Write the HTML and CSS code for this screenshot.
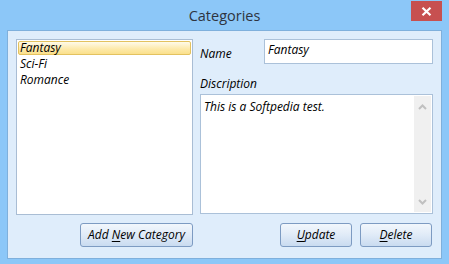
FILE: index.html
```html
<!DOCTYPE html>
<html>
<head>
<meta charset="utf-8">
<link rel="stylesheet" href="styles.css">
</head>
<body>
<div class="window">
  <div class="titlebar">
    <div class="title">Categories</div>
    <div class="close">
      <svg width="11" height="9" viewBox="0 0 11 9"><path d="M1.5 0.8 L9.5 8.2 M9.5 0.8 L1.5 8.2" stroke="#fff" stroke-width="2.2"/></svg>
    </div>
  </div>
  <div class="client">
    <div class="main">
      <div class="listbox">
        <div class="item selected">Fantasy</div>
        <div class="item">Sci-Fi</div>
        <div class="item">Romance</div>
      </div>
      <div class="details">
        <div class="name-row">
          <div class="label name-label">Name</div>
          <div class="input">Fantasy</div>
        </div>
        <div class="label desc-label">Discription</div>
        <div class="textarea">
          <div class="ta-text">This is a Softpedia test.</div>
          <div class="scrollbar">
            <svg width="9" height="6" viewBox="0 0 9 6"><path d="M1 5 L4.5 1.5 L8 5" fill="none" stroke="#c0c0c0" stroke-width="2"/></svg>
            <svg width="9" height="6" viewBox="0 0 9 6"><path d="M1 1 L4.5 4.5 L8 1" fill="none" stroke="#c0c0c0" stroke-width="2"/></svg>
          </div>
        </div>
      </div>
    </div>
    <div class="buttons">
      <div class="btn btn-add"><span>Add <u>N</u>ew Category</span></div>
      <div class="spacer"></div>
      <div class="btn btn-small"><span><u>U</u>pdate</span></div>
      <div class="btn btn-small last"><span><u>D</u>elete</span></div>
    </div>
  </div>
</div>
</body>
</html>
```
FILE: styles.css
```css
* { box-sizing: border-box; }
html, body {
  margin: 0;
  padding: 0;
  width: 449px;
  height: 264px;
  overflow: hidden;
  background: #8cc7f8;
}
.window {
  width: 449px;
  height: 264px;
  display: flex;
  flex-direction: column;
  font-family: "Open Sans", "Noto Sans", sans-serif;
}
.titlebar {
  height: 30px;
  position: relative;
  display: flex;
  justify-content: center;
  align-items: flex-start;
}
.title {
  font-size: 14.5px;
  color: #2e3440;
  line-height: 31px;
}
.close {
  position: absolute;
  left: 411px;
  top: 1px;
  width: 31px;
  height: 20px;
  background: #c75050;
  display: flex;
  align-items: center;
  justify-content: center;
}
.client {
  position: relative;
  margin-left: 7px;
  width: 435px;
  height: 229px;
  background: #dfedfb;
  border: 1px solid #7fb0dc;
  padding: 8px 8px 0 8px;
  display: flex;
  flex-direction: column;
}
.main {
  display: flex;
  gap: 7px;
  height: 176px;
  flex-shrink: 0;
}
.listbox {
  width: 177px;
  height: 176px;
  flex-shrink: 0;
  background: #fff;
  border: 1px solid #a9bdd4;
  padding: 0 1px;
  font-size: 12px;
  font-style: italic;
  color: #000;
}
.item {
  height: 16px;
  line-height: 16px;
  padding-left: 2px;
}
.item.selected {
  height: 14px;
  margin: 1px 0;
  line-height: 12px;
  padding-left: 1px;
  border: 1px solid #e3c25f;
  border-radius: 2px;
  background: linear-gradient(#fffbea, #fde9a8 60%, #fbe08c);
}
.details {
  width: 233px;
  flex-shrink: 0;
  display: flex;
  flex-direction: column;
}
.label {
  font-size: 12px;
  font-style: italic;
  color: #000;
}
.name-row {
  display: flex;
  align-items: center;
  height: 25px;
}
.name-label {
  width: 64px;
  padding-top: 3px;
}
.input {
  width: 169px;
  height: 25px;
  background: #fff;
  border: 1px solid #abc1d9;
  font-size: 12px;
  font-style: italic;
  padding: 2px 0 0 3px;
  line-height: 15px;
}
.desc-label {
  margin-top: 11px;
  line-height: 17px;
  height: 19px;
}
.textarea {
  height: 120px;
  background: #fff;
  border: 1px solid #abc1d9;
  display: flex;
  padding: 1px;
}
.ta-text {
  flex: 1;
  font-size: 12px;
  font-style: italic;
  color: #000;
  padding: 3px 0 0 2px;
  line-height: 15px;
}
.scrollbar {
  width: 17px;
  background: #f0f0f0;
  display: flex;
  flex-direction: column;
  justify-content: space-between;
  align-items: center;
  padding: 8px 0 7px 0;
}
.buttons {
  display: flex;
  margin-top: 8px;
  height: 24px;
}
.spacer { width: 87px; flex-shrink: 0; }
.btn {
  height: 24px;
  flex-shrink: 0;
  border: 1px solid #7d9bc2;
  border-radius: 3px;
  background: linear-gradient(#f2f7fc, #e2ecf8 45%, #c9dbf0);
  font-size: 12px;
  font-style: italic;
  color: #000;
  display: flex;
  align-items: center;
  justify-content: center;
  padding-bottom: 1px;
  white-space: nowrap;
}
.btn-add {
  margin-left: 64px;
  width: 113px;
}
.btn-small {
  width: 72px;
  margin-right: 8px;
}
.btn-small.last { margin-right: 0; }
.btn u { text-decoration-thickness: 1px; text-underline-offset: 2px; }
```
